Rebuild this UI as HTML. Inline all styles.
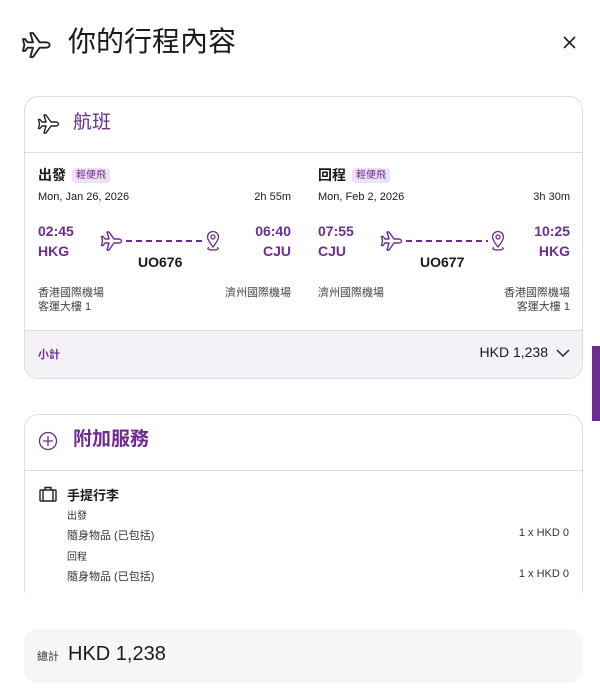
<!DOCTYPE html>
<html><head><meta charset="utf-8"><style>
*{box-sizing:border-box;margin:0;padding:0}
body{width:600px;height:700px;background:#fff;font-family:"Liberation Sans","Noto Sans CJK TC",sans-serif;color:#1a1a1a;position:relative;overflow:hidden}
.abs{position:absolute}
.p{color:#6e2c91}
.card{position:absolute;left:24px;width:559px;border:1px solid #ddd;border-radius:14px;background:#fff}
.tag{display:inline-block;background:#eee2f4;color:#6e2c91;font-size:10px;line-height:13px;padding:1px 4px;border-radius:3px;margin-left:6px;vertical-align:2px;font-weight:normal}
.b{font-weight:bold}
.dash{position:absolute;height:2px;background:repeating-linear-gradient(90deg,#6e2c91 0 6px,transparent 6px 10px)}
</style></head><body>
<svg class="abs" style="left:21px;top:29px" width="32" height="32" viewBox="0 0 24 24" fill="none" stroke="#222" stroke-width="1.4" stroke-linejoin="round"><path d="M21.5 12c0-1-1-2-3-2H14L9 3H7l2 7H5L3 7.5H1.5l1 4.5-1 4.5H3L5 14h4l-2 7h2l5-7h4.5c2 0 3-1 3-2z"/></svg>
<div class="abs" style="left:68px;top:24px;font-size:28px;line-height:36px">你的行程內容</div>
<svg class="abs" style="left:563px;top:36px" width="13" height="13" viewBox="0 0 13 13" stroke="#222" stroke-width="1.6"><path d="M1 1l11 11M12 1L1 12"/></svg>

<div class="card" style="top:96px;height:283px;overflow:hidden">
  <svg class="abs" style="left:12px;top:15px" width="24" height="24" viewBox="0 0 24 24" fill="none" stroke="#222" stroke-width="1.4" stroke-linejoin="round"><path d="M21.5 12c0-1-1-2-3-2H14L9 3H7l2 7H5L3 7.5H1.5l1 4.5-1 4.5H3L5 14h4l-2 7h2l5-7h4.5c2 0 3-1 3-2z"/></svg>
  <div class="abs p" style="left:48px;top:13px;font-size:19px;line-height:26px">航班</div>
  <div class="abs" style="left:0;top:55px;width:100%;border-top:1px solid #ddd"></div>

  <div class="abs" style="left:13px;top:68px;width:253px;font-size:12px">
    <div class="b" style="font-size:14px;line-height:20px">出發<span class="tag">輕便飛</span></div>
    <div style="position:relative;height:20px;margin-top:6px;font-size:11px">Mon, Jan 26, 2026<span style="position:absolute;right:0">2h 55m</span></div>
    <div class="p b" style="position:absolute;top:56px;left:0;font-size:14px;line-height:20px">02:45<br>HKG</div>
    <div class="p b" style="position:absolute;top:56px;right:0;font-size:14px;line-height:20px;text-align:right">06:40<br>CJU</div>
    <svg style="position:absolute;left:62px;top:64px" width="24" height="24" viewBox="0 0 24 24" fill="none" stroke="#6e2c91" stroke-width="1.4" stroke-linejoin="round"><path d="M21.5 12c0-1-1-2-3-2H14L9 3H7l2 7H5L3 7.5H1.5l1 4.5-1 4.5H3L5 14h4l-2 7h2l5-7h4.5c2 0 3-1 3-2z"/></svg>
    <div class="dash" style="left:88px;top:75px;width:76px"></div>
    <svg style="position:absolute;left:166px;top:65px" width="18" height="22" viewBox="0 0 18 22" fill="none" stroke="#6e2c91" stroke-width="1.3"><path d="M9 17C5 12 3.5 9.5 3.5 7a5.5 5.5 0 0 1 11 0c0 2.5-1.5 5-5.5 10z"/><circle cx="9" cy="7" r="2"/><path d="M5 17.5c-2 .5-2 2.5 4 2.5s6-2 4-2.5"/></svg>
    <div class="b" style="position:absolute;left:100px;top:89px;font-size:14px">UO676</div>
    <div style="position:absolute;top:121px;left:0;font-size:11px;line-height:14px;color:#444">香港國際機場<br>客運大樓 1</div>
    <div style="position:absolute;top:121px;right:0;font-size:11px;line-height:14px;color:#444">濟州國際機場</div>
  </div>

  <div class="abs" style="left:293px;top:68px;width:252px;font-size:12px">
    <div class="b" style="font-size:14px;line-height:20px">回程<span class="tag">輕便飛</span></div>
    <div style="position:relative;height:20px;margin-top:6px;font-size:11px">Mon, Feb 2, 2026<span style="position:absolute;right:0">3h 30m</span></div>
    <div class="p b" style="position:absolute;top:56px;left:0;font-size:14px;line-height:20px">07:55<br>CJU</div>
    <div class="p b" style="position:absolute;top:56px;right:0;font-size:14px;line-height:20px;text-align:right">10:25<br>HKG</div>
    <svg style="position:absolute;left:62px;top:64px" width="24" height="24" viewBox="0 0 24 24" fill="none" stroke="#6e2c91" stroke-width="1.4" stroke-linejoin="round"><path d="M21.5 12c0-1-1-2-3-2H14L9 3H7l2 7H5L3 7.5H1.5l1 4.5-1 4.5H3L5 14h4l-2 7h2l5-7h4.5c2 0 3-1 3-2z"/></svg>
    <div class="dash" style="left:88px;top:75px;width:82px"></div>
    <svg style="position:absolute;left:171px;top:65px" width="18" height="22" viewBox="0 0 18 22" fill="none" stroke="#6e2c91" stroke-width="1.3"><path d="M9 17C5 12 3.5 9.5 3.5 7a5.5 5.5 0 0 1 11 0c0 2.5-1.5 5-5.5 10z"/><circle cx="9" cy="7" r="2"/><path d="M5 17.5c-2 .5-2 2.5 4 2.5s6-2 4-2.5"/></svg>
    <div class="b" style="position:absolute;left:102px;top:89px;font-size:14px">UO677</div>
    <div style="position:absolute;top:121px;left:0;font-size:11px;line-height:14px;color:#444">濟州國際機場</div>
    <div style="position:absolute;top:121px;right:0;font-size:11px;line-height:14px;color:#444;text-align:right">香港國際機場<br>客運大樓 1</div>
  </div>

  <div class="abs" style="left:0;top:233px;width:100%;height:50px;background:#f4f2f7;border-top:1px solid #ddd"></div>
  <div class="abs p b" style="left:13px;top:249px;font-size:11px">小計</div>
  <div class="abs" style="right:34px;top:247px;font-size:14px">HKD 1,238</div>
  <svg class="abs" style="right:12px;top:251px" width="14" height="10" viewBox="0 0 14 10" fill="none" stroke="#222" stroke-width="1.5"><path d="M1 2l6 6 6-6"/></svg>
</div>

<div class="abs" style="left:592px;top:346px;width:8px;height:75px;background:#6e2c91"></div>

<div class="card" style="top:414px;height:200px;border-bottom:none;border-radius:14px 14px 0 0">
  <svg class="abs" style="left:13px;top:16px" width="20" height="20" viewBox="0 0 20 20" fill="none" stroke="#6e2c91" stroke-width="1.3"><circle cx="10" cy="10" r="8.5"/><path d="M10 5v10M5 10h10"/></svg>
  <div class="abs p b" style="left:48px;top:12px;font-size:19px;line-height:26px">附加服務</div>
  <div class="abs" style="left:0;top:55px;width:100%;border-top:1px solid #ddd"></div>
  <svg class="abs" style="left:14px;top:71px" width="18" height="16" viewBox="0 0 18 16" fill="none" stroke="#222" stroke-width="1.4"><rect x="1" y="4" width="16" height="11" rx="1"/><path d="M6 4V1.5h6V4M4 4v11M14 4v11"/></svg>
  <div class="abs b" style="left:42px;top:70px;font-size:13px">手提行李</div>
  <div class="abs" style="left:42px;top:92px;font-size:10px;color:#333">出發</div>
  <div class="abs" style="left:42px;top:112px;font-size:11px;color:#333">隨身物品 (已包括)</div>
  <div class="abs" style="right:13px;top:112px;font-size:11px;color:#333">1 x HKD 0</div>
  <div class="abs" style="left:42px;top:133px;font-size:10px;color:#333">回程</div>
  <div class="abs" style="left:42px;top:153px;font-size:11px;color:#333">隨身物品 (已包括)</div>
  <div class="abs" style="right:13px;top:153px;font-size:11px;color:#333">1 x HKD 0</div>
</div>
<div class="abs" style="left:0;top:593px;width:600px;height:107px;background:#fff"></div>
<div class="abs" style="left:24px;top:629px;width:559px;height:54px;background:#f6f6f6;border-radius:14px"></div>
<div class="abs" style="left:37px;top:648px;font-size:11px;color:#333">總計</div>
<div class="abs" style="left:68px;top:642px;font-size:20px;line-height:24px">HKD 1,238</div>
</body></html>
